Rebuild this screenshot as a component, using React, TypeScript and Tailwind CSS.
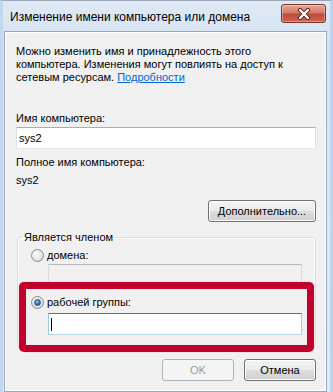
import { FC } from "react";

const font = "font-['Segoe_UI','Liberation_Sans',sans-serif]";

const Radio: FC<{ checked?: boolean }> = ({ checked }) => (
  <span className="flex h-[13px] w-[13px] items-center justify-center rounded-full border border-[#8a8a8a] bg-[radial-gradient(circle_at_40%_35%,#ffffff,#e2e2e2_60%,#cfcfcf)]">
    {checked && (
      <span className="h-[7px] w-[7px] rounded-full border border-[#1a4f8a] bg-[radial-gradient(circle_at_40%_35%,#8ec3f0,#2a6fc0_60%,#164c8c)]" />
    )}
  </span>
);

const WinButton: FC<{ label: string; disabled?: boolean; className?: string }> = ({
  label,
  disabled,
  className = "",
}) =>
  disabled ? (
    <div
      className={`flex h-[22px] items-center justify-center rounded-[3px] border border-[#adb2b5] bg-[#f4f4f4] text-[11px] text-[#9a9a9a] ${className}`}
    >
      {label}
    </div>
  ) : (
    <div
      className={`flex h-[22px] items-center justify-center rounded-[3px] border border-[#707070] bg-[linear-gradient(#f3f3f3,#ebebeb_49%,#dddddd_51%,#cfcfcf)] text-[11px] text-black shadow-[inset_0_0_0_1px_#fcfcfc] ${className}`}
    >
      {label}
    </div>
  );

const CloseButton = () => (
  <div className="mt-[3px] flex h-[19px] w-[45px] items-center justify-center rounded-[3px] border border-[#7a3328] bg-[linear-gradient(#e9a99a,#d57a68_45%,#c24a38_55%,#c96452)] shadow-[inset_0_0_0_1px_rgba(255,255,255,0.35)]">
    <svg width="14" height="12" viewBox="0 0 14 12">
      <path d="M3 2 L11 10 M11 2 L3 10" stroke="#5a2a22" strokeWidth="4.2" strokeLinecap="round" />
      <path d="M3 2 L11 10 M11 2 L3 10" stroke="#ffffff" strokeWidth="2.4" strokeLinecap="round" />
    </svg>
  </div>
);

const App = () => {
  return (
    <div
      className={`flex h-[392px] w-[333px] flex-col overflow-hidden border-t border-t-[#9aa6b4] border-l-[3px] border-r-[3px] border-l-[#c3d7ee] border-r-[#bcd5ef] bg-[linear-gradient(#dfe9f5,#d6e3f2_40px,#e3ecf6)] pl-[1px] pr-[3px] ${font}`}
    >
      <div className="flex h-[30px] shrink-0 items-start justify-between">
        <span className="mt-[9px] pl-[6px] text-[12px] leading-[15px] text-black">
          Изменение имени компьютера или домена
        </span>
        <div className="mr-[1px]">
          <CloseButton />
        </div>
      </div>

      <div className="flex-1 border border-[#97a6b8] bg-[#f0f0f0] pl-[11px] pr-[10px] pt-[13px] text-[11px] leading-[13px] text-black shadow-[inset_0_0_0_1px_#ffffff]">
        <p>
          Можно изменить имя и принадлежность этого
          <br />
          компьютера. Изменения могут повлиять на доступ к
          <br />
          сетевым ресурсам.{" "}
          <span className="text-[#0066cc] underline">Подробности</span>
        </p>

        <div className="mt-[28px]">Имя компьютера:</div>
        <div className="mt-[2px] flex h-[22px] items-center border border-[#abadb3] border-l-[#dbdfe6] border-r-[#dbdfe6] border-b-[#e3e9ef] bg-white pl-[2px]">
          sys2
        </div>

        <div className="mt-[7px]">Полное имя компьютера:</div>
        <div className="mt-[5px]">sys2</div>

        <div className="mt-[13px] flex justify-end">
          <WinButton label="Дополнительно..." className="w-[108px]" />
        </div>

        <fieldset className="ml-[1px] mt-[9px] rounded-[3px] border border-[#d5dfe5] px-0 pb-[12px] shadow-[inset_0_0_0_1px_#ffffff]">
          <legend className="ml-[4px] px-[2px]">Является членом</legend>
          <div className="pl-[13px] pr-[13px]">
            <div className="mt-[5px] flex h-[13px] items-center gap-[3px]">
              <Radio />
              <span>домена:</span>
            </div>
            <div className="ml-[17px] mt-[2px] h-[22px] border border-[#b9b9b9] border-l-[#dadada] border-r-[#dadada] border-b-[#e3e3e3]" />

            <div className="relative mt-[10px]">
              <div className="flex h-[13px] items-center gap-[3px]">
                <Radio checked />
                <span>рабочей группы:</span>
              </div>
              <div className="ml-[17px] mt-[4px] flex h-[22px] items-center border border-[#3d7bad] border-l-[#a4c9e3] border-r-[#a4c9e3] border-b-[#b7d9ed] bg-white pl-[2px]">
                <span className="h-[13px] w-px bg-black" />
              </div>
              <div className="pointer-events-none absolute -bottom-[17px] -left-[12px] -right-[12px] -top-[14px] rounded-[5px] border-[7px] border-[#c1002b] shadow-[0_0_1px_#e06a80]" />
            </div>
          </div>
        </fieldset>

        <div className="mt-[11px] flex justify-end gap-[10px]">
          <WinButton label="OK" disabled className="w-[72px]" />
          <WinButton label="Отмена" className="w-[72px]" />
        </div>
      </div>
    </div>
  );
};

export default App;
